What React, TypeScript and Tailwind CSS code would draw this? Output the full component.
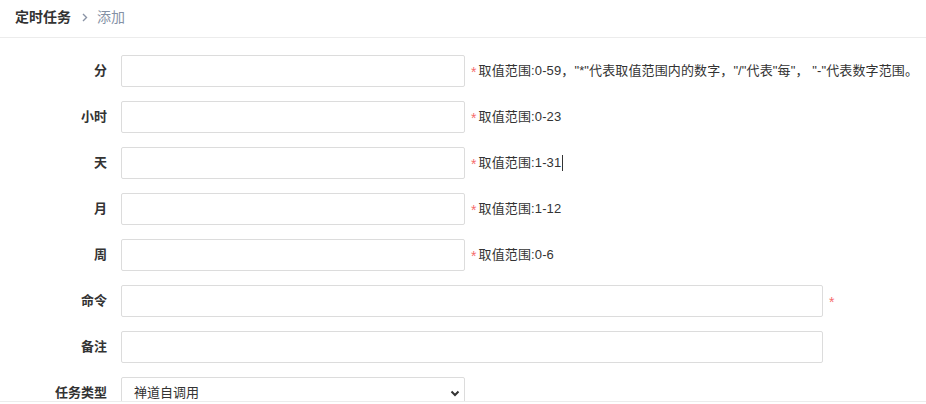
import React from "react";

const font = { fontFamily: '"Liberation Sans", "Noto Sans CJK SC", sans-serif' };

function Row({ label, wide, help, star, caret }: { label: string; wide?: boolean; help?: string; star?: boolean; caret?: boolean }) {
  return (
    <div className="flex items-center h-8">
      <div className="w-[108px] pr-[1px] text-right text-[13px] font-bold text-[#333]">{label}</div>
      <div className="w-[13px]" />
      <input
        className={`${wide ? "w-[702px]" : "w-[344px]"} h-8 border border-[#dcdcdc] rounded-[2px] bg-white outline-none`}
      />
      {help !== undefined && (
        <div className="flex items-center ml-[6px] text-[13px] text-[#333] tracking-[0.12px]">
          <span className="text-[#f56c6c] mr-[2px] text-[14px] leading-none pt-[2px]">*</span>
          <span>{help}</span>
          {caret && <span className="inline-block w-[1px] h-[16px] bg-[#333] ml-[1px]" />}
        </div>
      )}
      {star && <span className="ml-[6px] text-[#f56c6c] text-[14px] leading-none pt-[2px]">*</span>}
    </div>
  );
}

export default function App() {
  return (
    <div className="w-[926px] h-[404px] overflow-hidden bg-white" style={font}>
      <div className="h-[402px] border-b border-[#ececec] overflow-hidden">
        <div className="h-[38px] border-b border-[#ececec] flex items-center pl-[15px] pb-[2px]">
          <span className="text-[14px] font-bold text-[#333]">定时任务</span>
          <svg className="ml-[11px] mr-[9px]" width="6" height="9" viewBox="0 0 6 9">
            <path d="M1 1 L4.5 4.5 L1 8" stroke="#8a94a6" strokeWidth="1.4" fill="none" />
          </svg>
          <span className="text-[14px] text-[#8591a5]">添加</span>
        </div>
        <div className="pt-[17px] flex flex-col gap-[14px]">
          <Row label="分" help={'取值范围:0-59，"*"代表取值范围内的数字，"/"代表"每"， "-"代表数字范围。'} />
          <Row label="小时" help="取值范围:0-23" />
          <Row label="天" help="取值范围:1-31" caret />
          <Row label="月" help="取值范围:1-12" />
          <Row label="周" help="取值范围:0-6" />
          <Row label="命令" wide star />
          <Row label="备注" wide />
          <div className="flex items-center h-8">
            <div className="w-[108px] pr-[1px] text-right text-[13px] font-bold text-[#333]">任务类型</div>
            <div className="w-[13px]" />
            <div className="w-[344px] h-8 border border-[#dcdcdc] rounded-[2px] flex items-center justify-between pl-[12px] pr-[4px] text-[13px] text-[#333]">
              <span>禅道自调用</span>
              <svg width="10" height="7" viewBox="0 0 10 7">
                <path d="M1.5 1.5 L5 5 L8.5 1.5" stroke="#333" strokeWidth="2" fill="none" />
              </svg>
            </div>
          </div>
        </div>
      </div>
    </div>
  );
}
